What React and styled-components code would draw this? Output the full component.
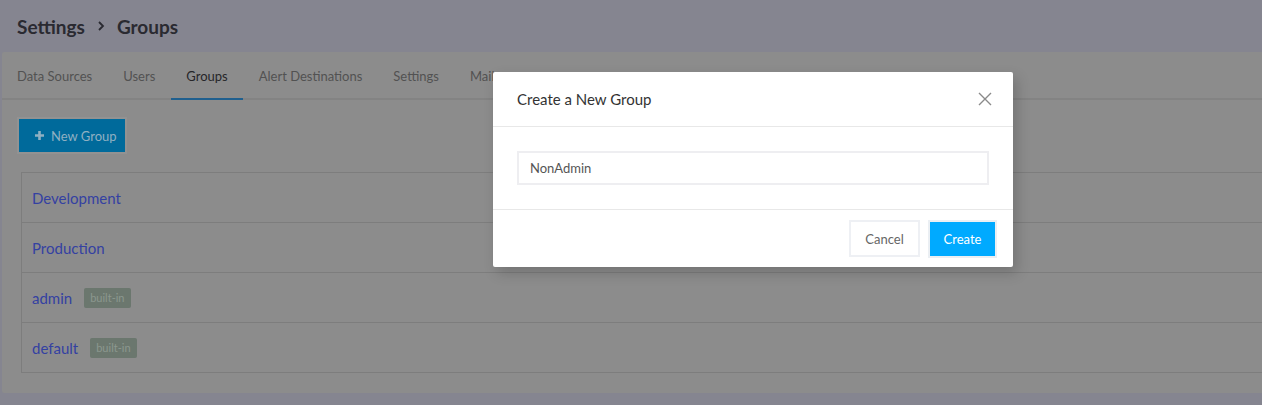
import React from "react";
import styled, { createGlobalStyle } from "styled-components";

// page colours are the dimmed ones (the mask is painted in)
const GlobalStyle = createGlobalStyle`
  html, body {
    margin: 0;
    padding: 0;
    background: #858590;
    font-family: Lato, "Liberation Sans", sans-serif;
    overflow: hidden;
  }
`;

const Page = styled.div`
  width: 1262px;
  height: 405px;
  background: #858590;
  position: relative;
  overflow: hidden;
`;

const PageHeader = styled.div`
  height: 52px;
  display: flex;
  align-items: center;
  gap: 10px;
  padding-left: 17px;
  font-size: 19px;
  font-weight: 700;
  color: #2a2a31;
`;

const Card = styled.div`
  margin: 0 -40px 0 2px;
  height: 341px;
  background: #8c8c8c;
  border-radius: 2px;
`;

const Tabs = styled.div`
  display: flex;
  border-bottom: 2px solid #838383;
  height: 46px;
`;

const Tab = styled.div`
  padding: 0 15.5px;
  display: flex;
  align-items: center;
  font-size: 13px;
  color: ${({ active }) => (active ? "#262629" : "#525252")};
  border-bottom: 2px solid ${({ active }) => (active ? "#1f5f8e" : "transparent")};
  margin-bottom: -2px;
  padding-top: 2px;
  &:first-child {
    padding-left: 15px;
  }
`;

const Content = styled.div`
  padding: 17px 0 0 15px;
`;

const NewButton = styled.div`
  display: inline-flex;
  align-items: center;
  gap: 6px;
  height: 33px;
  width: 106px;
  box-sizing: border-box;
  padding-left: 15px;
  margin: 2px;
  background: #006a9b;
  color: #8fb0c2;
  font-size: 13px;
  box-shadow: 0 0 0 2px #929292;
`;

const List = styled.div`
  margin: 18px 0 0 4px;
  border: 1px solid #7d7d7d;
  border-right: none;
`;

const Row = styled.div`
  height: 49px;
  display: flex;
  align-items: center;
  padding-left: 10px;
  gap: 12px;
  & + & {
    border-top: 1px solid #7d7d7d;
  }
`;

const GroupLink = styled.span`
  color: #3441a2;
  font-size: 15px;
`;

const Badge = styled.span`
  background: #6b776e;
  color: #8c978e;
  font-size: 11px;
  padding: 3px 6px 4px;
  border-radius: 2px;
`;

const Modal = styled.div`
  position: absolute;
  left: 493px;
  top: 72px;
  width: 520px;
  background: #fff;
  border-radius: 2px;
  box-shadow: 4px 6px 14px rgba(0, 0, 0, 0.18);
`;

const ModalHeader = styled.div`
  height: 54px;
  display: flex;
  align-items: center;
  justify-content: space-between;
  padding: 0 20px 0 24px;
  border-bottom: 1px solid #e8e8e8;
  font-size: 15px;
  color: #333;
`;

const Close = styled.span`
  display: flex;
  width: 16px;
  height: 16px;
`;

const ModalBody = styled.div`
  padding: 24px 24px;
  border-bottom: 1px solid #e8e8e8;
`;

const Input = styled.div`
  height: 34px;
  box-sizing: border-box;
  border: 2px solid #eeeef1;
  display: flex;
  align-items: center;
  padding-left: 11px;
  font-size: 13px;
  color: #555;
`;

const ModalFooter = styled.div`
  height: 57px;
  display: flex;
  align-items: center;
  justify-content: flex-end;
  gap: 10px;
  padding-right: 18px;
`;

const Button = styled.div`
  display: flex;
  align-items: center;
  justify-content: center;
  box-sizing: border-box;
  font-size: 13px;
  width: ${({ primary }) => (primary ? "65px" : "71px")};
  height: ${({ primary }) => (primary ? "34px" : "37px")};
  background: ${({ primary }) => (primary ? "#00aaff" : "#fff")};
  color: ${({ primary }) => (primary ? "#fff" : "#666")};
  border: ${({ primary }) => (primary ? "none" : "2px solid #eef0f4")};
  box-shadow: ${({ primary }) => (primary ? "0 0 0 2px #ebeff3" : "none")};
`;

const tabs = ["Data Sources", "Users", "Groups", "Alert Destinations", "Settings", "Mail"];

const groups = [
  { name: "Development" },
  { name: "Production" },
  { name: "admin", builtIn: true },
  { name: "default", builtIn: true },
];

export default function App() {
  return (
    <>
      <GlobalStyle />
      <Page>
        <PageHeader>
          Settings
          <svg width="12" height="12" viewBox="0 0 12 12">
            <path d="M4 2 L8 6 L4 10" fill="none" stroke="#2a2a31" strokeWidth="1.8" />
          </svg>
          Groups
        </PageHeader>
        <Card>
          <Tabs>
            {tabs.map((t) => (
              <Tab key={t} active={t === "Groups"}>
                {t}
              </Tab>
            ))}
          </Tabs>
          <Content>
            <NewButton>
              <svg width="11" height="11" viewBox="0 0 11 11">
                <path d="M5.5 1 V10 M1 5.5 H10" stroke="#8fb0c2" strokeWidth="2.6" />
              </svg>
              New Group
            </NewButton>
            <List>
              {groups.map((g) => (
                <Row key={g.name}>
                  <GroupLink>{g.name}</GroupLink>
                  {g.builtIn && <Badge>built-in</Badge>}
                </Row>
              ))}
            </List>
          </Content>
        </Card>

        <Modal>
          <ModalHeader>
            Create a New Group
            <Close>
              <svg width="16" height="16" viewBox="0 0 16 16">
                <path d="M2 2 L14 14 M14 2 L2 14" stroke="#8a8a8a" strokeWidth="1.4" />
              </svg>
            </Close>
          </ModalHeader>
          <ModalBody>
            <Input>NonAdmin</Input>
          </ModalBody>
          <ModalFooter>
            <Button>Cancel</Button>
            <Button primary>Create</Button>
          </ModalFooter>
        </Modal>
      </Page>
    </>
  );
}
